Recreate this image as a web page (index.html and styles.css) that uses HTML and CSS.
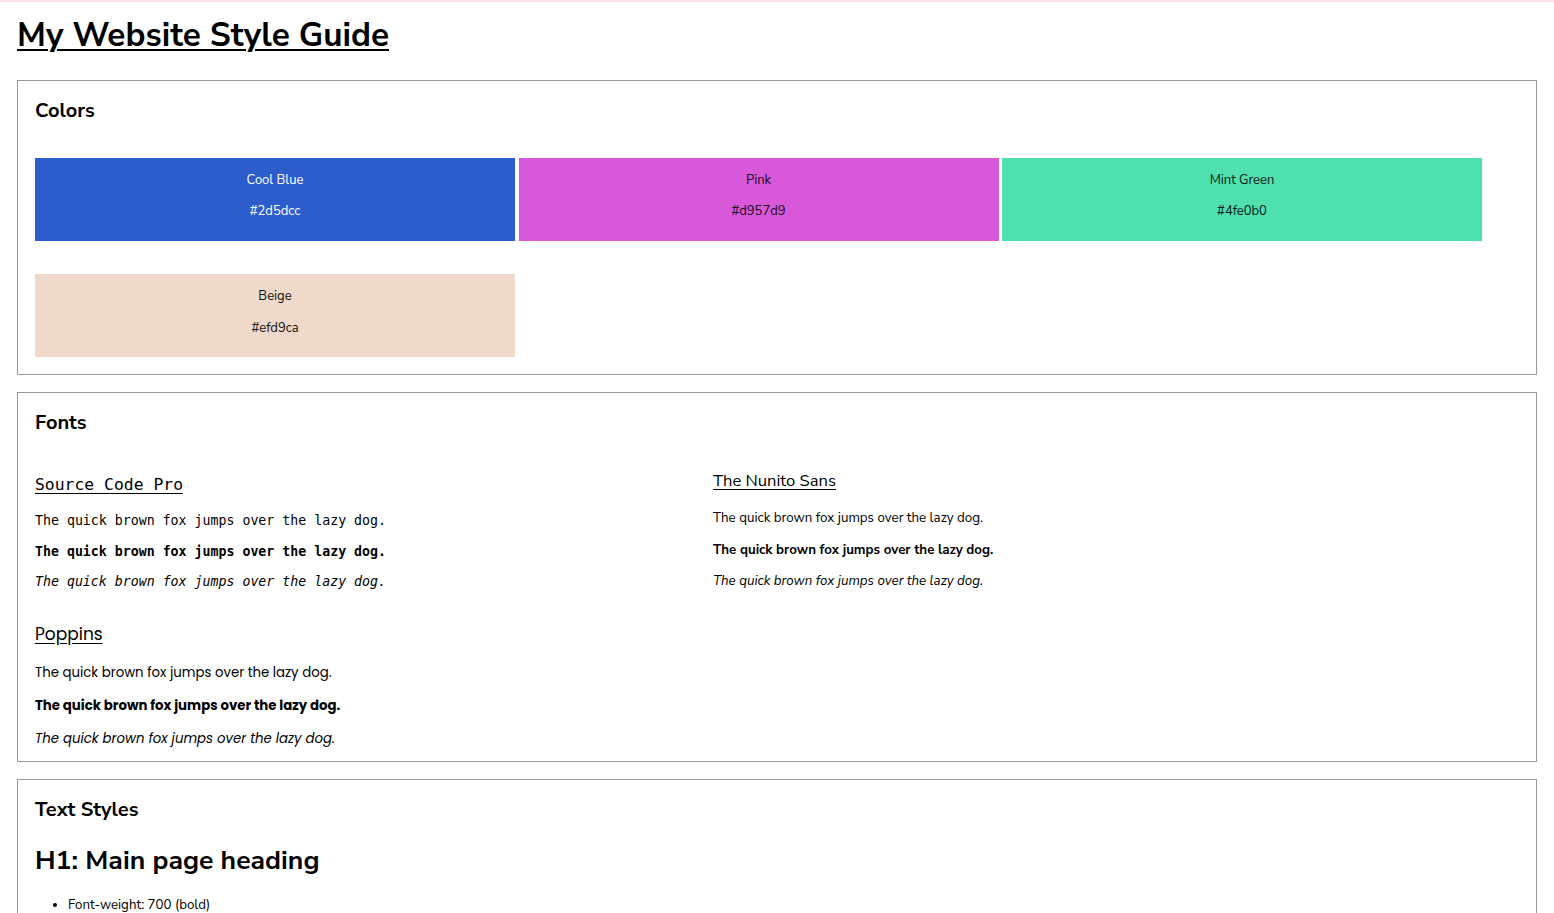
FILE: index.html
```html
<!DOCTYPE html>
<html lang="en">
<head>
<meta charset="utf-8">
<title>My Website Style Guide</title>
<link rel="stylesheet" href="styles.css">
</head>
<body>
<div class="topbar"></div>
<main class="page">
  <h1 class="title">My Website Style Guide</h1>

  <section class="card colors">
    <h2 class="card-title">Colors</h2>
    <div class="swatches">
      <div class="swatch swatch-blue"><p>Cool Blue</p><p>#2d5dcc</p></div>
      <div class="swatch swatch-pink"><p>Pink</p><p>#d957d9</p></div>
      <div class="swatch swatch-mint"><p>Mint Green</p><p>#4fe0b0</p></div>
      <div class="swatch swatch-beige"><p>Beige</p><p>#efd9ca</p></div>
    </div>
  </section>

  <section class="card fonts">
    <h2 class="card-title">Fonts</h2>
    <div class="font-grid">
      <div class="font-block mono">
        <h3 class="font-name">Source Code Pro</h3>
        <p>The quick brown fox jumps over the lazy dog.</p>
        <p class="b">The quick brown fox jumps over the lazy dog.</p>
        <p class="i">The quick brown fox jumps over the lazy dog.</p>
      </div>
      <div class="font-block nunito">
        <h3 class="font-name">The Nunito Sans</h3>
        <p>The quick brown fox jumps over the lazy dog.</p>
        <p class="b">The quick brown fox jumps over the lazy dog.</p>
        <p class="i">The quick brown fox jumps over the lazy dog.</p>
      </div>
      <div class="font-block poppins">
        <h3 class="font-name">Poppins</h3>
        <p>The quick brown fox jumps over the lazy dog.</p>
        <p class="b">The quick brown fox jumps over the lazy dog.</p>
        <p class="i">The quick brown fox jumps over the lazy dog.</p>
      </div>
    </div>
  </section>

  <section class="card text-styles">
    <h2 class="card-title">Text Styles</h2>
    <h1 class="sample-h1">H1: Main page heading</h1>
    <ul class="spec">
      <li>Font-weight: 700 (bold)</li>
      <li>Font-size: 2rem</li>
    </ul>
  </section>
</main>
</body>
</html>
```

FILE: styles.css
```css
html, body {
  margin: 0;
  padding: 0;
  background: #fff;
}

body {
  font-family: "Nunito Sans", "Lato", "Open Sans", sans-serif;
  color: #000;
}

.topbar {
  height: 2px;
  background: #fde1e8;
}

.page {
  padding: 0 17px;
}

.title {
  margin: 11px 0 23px 0;
  font-size: 33.3px;
  line-height: 44px;
  font-weight: 700;
  text-decoration: underline;
  text-decoration-thickness: 2px;
  text-underline-offset: 3px;
}

.card {
  border: 1px solid #999;
  padding: 17px;
  margin-bottom: 17px;
}

.card.fonts {
  padding-bottom: 15px;
}

.card-title {
  margin: 0;
  font-size: 20px;
  line-height: 26px;
  font-weight: 700;
}

/* Colors */
.swatches {
  margin-top: 34px;
  display: flex;
  flex-wrap: wrap;
  column-gap: 3.5px;
  row-gap: 33px;
}

.swatch {
  width: 480px;
  height: 83px;
  box-sizing: border-box;
  padding-top: 12px;
  display: flex;
  flex-direction: column;
  align-items: center;
  gap: 11px;
  font-size: 13px;
  color: #111;
}

.swatch p {
  margin: 0;
  line-height: 20px;
}

.swatch-beige p + p {
  margin-top: 1px;
}

.swatch-blue { background: #2d5dcc; color: #fff; }
.swatch-pink { background: #d957d9; color: #1a0a1a; }
.swatch-mint { background: #4fe0b0; color: #0a1a14; }
.swatch-beige { background: #efd9ca; color: #111; }

/* Fonts */
.font-grid {
  display: grid;
  grid-template-columns: 678px 1fr;
  align-items: start;
  margin-top: 22px;
}

.font-block p {
  margin: 0;
}

.font-name {
  margin: 0;
  font-weight: 400;
  text-decoration: underline;
  text-underline-offset: 3px;
}

.mono {
  font-family: "DejaVu Sans Mono", "Liberation Mono", monospace;
}
.mono .font-name {
  margin-top: 16px;
  font-size: 16.4px;
  line-height: 22px;
  margin-bottom: 15px;
}
.mono p {
  font-size: 13.25px;
  line-height: 20px;
}
.mono p + p {
  margin-top: 10.5px;
}

.nunito .font-name {
  margin-top: 11px;
  font-size: 16.6px;
  line-height: 23px;
  margin-bottom: 16px;
}
.nunito p {
  font-size: 13.35px;
  line-height: 20px;
}
.nunito p + p {
  margin-top: 11.5px;
}

.poppins {
  grid-column: 1;
  font-family: "Poppins", "Inter", sans-serif;
  padding-top: 30px;
}
.poppins .font-name {
  font-size: 17px;
  line-height: 24px;
  margin-bottom: 20px;
}
.poppins p {
  font-size: 13.3px;
  line-height: 14px;
}
.poppins p + p {
  margin-top: 19px;
}

.b { font-weight: 700; }
.i { font-style: italic; }

/* Text styles */
.sample-h1 {
  margin: 18px 0 0 0;
  font-size: 26.6px;
  line-height: 38px;
  font-weight: 700;
}

.spec {
  margin: 16px 0 0 0;
  padding-left: 33px;
  font-size: 13.3px;
  line-height: 20px;
}
```
